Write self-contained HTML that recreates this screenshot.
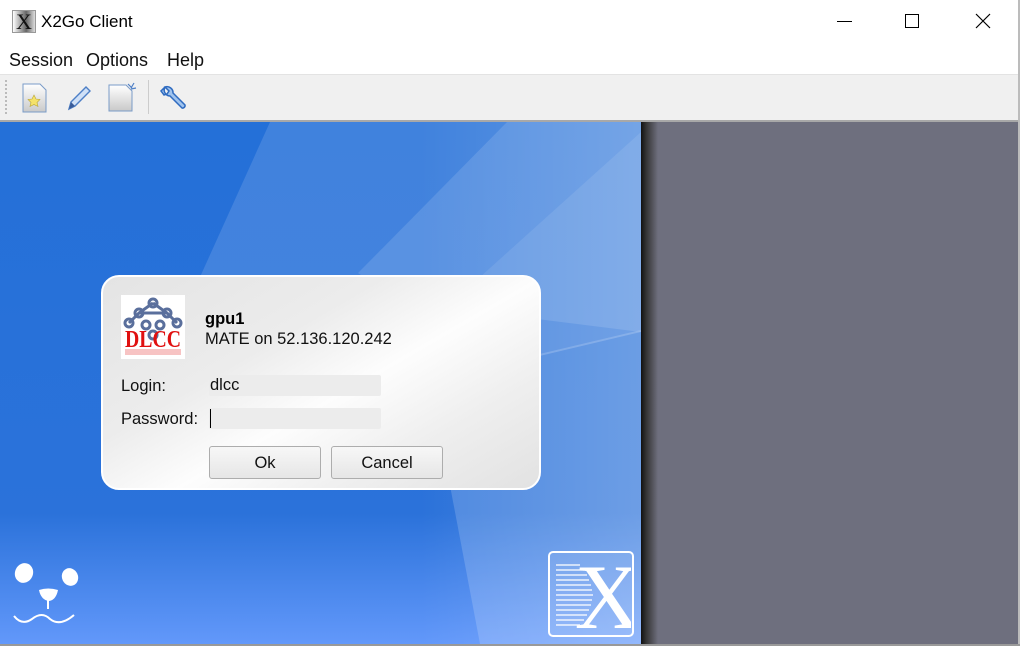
<!DOCTYPE html>
<html><head><meta charset="utf-8"><style>
*{margin:0;padding:0;box-sizing:border-box}
body{width:1020px;height:646px;overflow:hidden;background:#fff;font-family:"Liberation Sans",sans-serif;position:relative}
.abs{position:absolute}
.menu span{position:absolute;top:50px;font-size:18px;color:#111}
.inp{position:absolute;left:209px;width:172px;height:21px;background:#ececec;border-radius:2px;font-size:16.5px;padding:1px 1px;color:#111}
.btn{position:absolute;top:446px;width:112px;height:33px;border:1px solid #adadad;border-radius:3px;background:linear-gradient(#f7f7f7,#e6e6e6);font-size:16.5px;text-align:center;line-height:33px;color:#111}
.lbl{position:absolute;left:121px;font-size:16.5px;color:#111}
</style></head><body>
<div class="abs" style="left:12px;top:10px;width:24px;height:23px;border:1px solid #999;background:linear-gradient(90deg,#fff,#666 60%,#ddd);font-family:'Liberation Serif',serif;font-size:22px;line-height:21px;text-align:center;color:#111">X</div>
<div class="abs" style="left:41px;top:12px;font-size:17px;color:#000">X2Go Client</div>
<div class="abs" style="left:837px;top:21px;width:15px;height:1px;background:#000"></div>
<div class="abs" style="left:905px;top:14px;width:14px;height:14px;border:1px solid #000"></div>
<svg class="abs" style="left:975px;top:13px" width="16" height="16"><path d="M1 1L15 15M15 1L1 15" stroke="#000" stroke-width="1.2"/></svg>
<div class="menu"><span style="left:9px">Session</span><span style="left:86px">Options</span><span style="left:167px">Help</span></div>
<div class="abs" style="left:0;top:74px;width:1018px;height:47px;background:#f0f0f0;border-top:1px solid #e3e3e3"></div>
<div class="abs" style="left:5px;top:80px;width:2px;height:34px;border-left:2px dotted #bbb"></div>
<svg class="abs" style="left:22px;top:83px" width="26" height="30"><defs><linearGradient id="g1" x1="0" y1="0" x2="0" y2="1"><stop offset="0" stop-color="#fff"/><stop offset="1" stop-color="#c9c9c9"/></linearGradient></defs><path d="M1 1h17l6 6v22H1z" fill="url(#g1)" stroke="#7a9bc8"/><path d="M12 12l2 4 4 .5-3 3 1 4-4-2-4 2 1-4-3-3 4-.5z" fill="#f5e26a" stroke="#b9a636" stroke-width=".6"/></svg>
<svg class="abs" style="left:66px;top:84px" width="26" height="28"><path d="M3 25l2-7L20 3l4 4L9 22z" fill="#cfe0f7" stroke="#4d7fc6" stroke-width="1.4"/><path d="M3 25l2-7 4 4z" fill="#3a5c99"/></svg>
<svg class="abs" style="left:108px;top:82px" width="30" height="30"><path d="M1 3h17l6 6v20H1z" fill="url(#g1)" stroke="#7a9bc8"/><path d="M20 2l4 4M26 1l-3 5M28 6l-5 1" stroke="#4d7fc6" stroke-width="1.2"/></svg>
<div class="abs" style="left:148px;top:80px;width:1px;height:34px;background:#ccc"></div>
<svg class="abs" style="left:160px;top:84px" width="28" height="28"><path d="M5 3a6 6 0 0 0 5 9l12 12a2.5 2.5 0 0 0 3-3L13 9a6 6 0 0 0-8-6l4 4-2 3-3 1-3-4z" fill="#9fc3ee" stroke="#2f6bc0" stroke-width="1.5"/></svg>
<div class="abs" style="left:0;top:120px;width:1018px;height:2px;background:#a8a8a8"></div>
<div class="abs" style="left:641px;top:122px;width:377px;height:522px;background:#6e6f7e"></div>
<div class="abs" style="left:641px;top:122px;width:17px;height:522px;background:linear-gradient(90deg,#111,#333 30%,#6e6f7e)"></div>
<div class="abs" style="left:1018px;top:0;width:2px;height:646px;background:#bcbcbc"></div>
<div class="abs" style="left:0;top:644px;width:1020px;height:2px;background:#999"></div>
<svg class="abs" style="left:0;top:122px" width="641" height="522">
<defs><linearGradient id="bg" x1="0" y1="0" x2="0" y2="1"><stop offset="0" stop-color="#2470d8"/><stop offset=".75" stop-color="#2b72da"/><stop offset="1" stop-color="#6298fa"/></linearGradient>
<linearGradient id="br" x1="0" y1="0" x2="1" y2="0"><stop offset="0" stop-color="#fff" stop-opacity="0"/><stop offset="1" stop-color="#fff" stop-opacity=".35"/></linearGradient></defs>
<rect width="641" height="522" fill="url(#bg)"/>
<polygon points="270,0 641,0 641,210 200,155" fill="#fff" opacity=".13"/>
<polygon points="507,0 641,0 641,10 430,200 358,151" fill="#fff" opacity=".12"/>
<polygon points="641,10 641,210 430,260 430,200" fill="#fff" opacity=".2"/>
<polygon points="641,208 641,522 480,522 430,258" fill="#fff" opacity=".17"/>
<rect x="420" y="0" width="221" height="522" fill="url(#br)" opacity=".5"/>
</svg>
<svg class="abs" style="left:10px;top:560px" width="80" height="70"><ellipse cx="14" cy="13" rx="9" ry="10" fill="#fff" transform="rotate(25 14 13)"/><ellipse cx="60" cy="17" rx="8" ry="9" fill="#fff" transform="rotate(-25 60 17)"/><path d="M29 30q9-3 19 0q-2 10-9 11q-8 -1-10-11z" fill="#fff"/><path d="M38 40v9" stroke="#fff" stroke-width="2"/><path d="M4 56q8 10 18 3q10-8 18 0q10 8 24-4" stroke="#fff" stroke-width="2" fill="none"/></svg>
<div class="abs" style="left:548px;top:551px;width:86px;height:86px;border:2px solid #fff;border-radius:5px;background:rgba(255,255,255,.08)"></div>
<svg class="abs" style="left:553px;top:560px" width="78" height="72"><g stroke="#fff" stroke-width="1.4" opacity=".85">
<path d="M3 5h24M3 10h28M3 15h31M3 20h33M3 25h35M3 30h36M3 35h37M3 40h36M3 45h35M3 50h33M3 55h31M3 60h28M3 65h24"/></g>
<text x="55" y="68" font-family="Liberation Serif,serif" font-size="92" fill="#fff" text-anchor="middle">X</text></svg>
<div class="abs" style="left:101px;top:275px;width:440px;height:215px;border:2px solid #fff;border-radius:18px;background:linear-gradient(150deg,#e4e4e4 0%,#ececec 35%,#fdfdfd 55%,#efefef 75%,#e2e2e2 100%)"></div>
<svg class="abs" style="left:121px;top:295px;background:#fff" width="64" height="64">
<g fill="none" stroke="#5a6f9c" stroke-width="3"><circle cx="32" cy="8" r="4"/><circle cx="18" cy="18" r="4"/><circle cx="46" cy="18" r="4"/><circle cx="8" cy="28" r="4"/><circle cx="56" cy="28" r="4"/><circle cx="25" cy="30" r="4"/><circle cx="39" cy="30" r="4"/><circle cx="32" cy="40" r="4"/><path d="M32 8L18 18 8 28M32 8l14 10 10 10M18 18h28"/></g>
<text x="32" y="52" font-family="Liberation Serif,serif" font-weight="bold" font-size="24" fill="#e01010" text-anchor="middle" textLength="56" lengthAdjust="spacingAndGlyphs">DLCC</text>
<rect x="4" y="54" width="56" height="6" fill="#e01010" opacity=".25"/></svg>
<div class="abs" style="left:205px;top:310px;font-size:16.5px;font-weight:bold;color:#000">gpu1</div>
<div class="abs" style="left:205px;top:330px;font-size:16.5px;color:#111">MATE on 52.136.120.242</div>
<div class="lbl" style="top:377px">Login:</div>
<div class="lbl" style="top:410px">Password:</div>
<div class="inp" style="top:375px">dlcc</div>
<div class="inp" style="top:408px"><div style="width:1px;height:19px;background:#000"></div></div>
<div class="btn" style="left:209px">Ok</div>
<div class="btn" style="left:331px">Cancel</div>
</body></html>
